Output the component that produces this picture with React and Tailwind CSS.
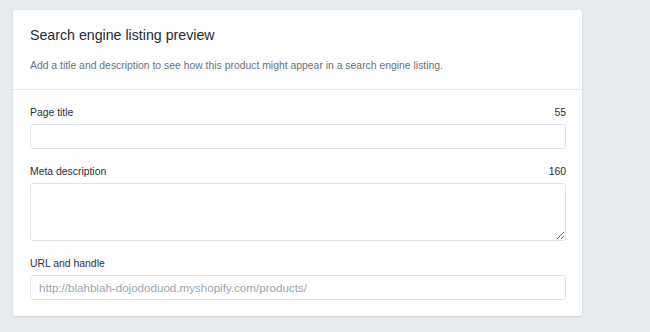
import React from 'react';

function Field({ label, count, children }) {
  return (
    <div className="flex flex-col">
      <div className="flex items-center justify-between h-[12px] mb-[5px] text-[10.4px] leading-[12px] text-[#2a3139]">
        <span>{label}</span>
        {count && <span>{count}</span>}
      </div>
      {children}
    </div>
  );
}

export default function App() {
  return (
    <div className="w-[650px] h-[332px] bg-[#e9ecef] pt-[10px] pl-[13px] font-['Liberation_Sans',Arial,sans-serif]">
      <div className="w-[569px] bg-white rounded-[3px] shadow-[0_1px_2px_rgba(63,63,68,0.15)]">
        <div className="px-[17px] pt-[16px] pb-[16px] border-b border-[#e6e9ec]">
          <h2 className="text-[14.2px] leading-[18px] text-[#212b36]">Search engine listing preview</h2>
          <p className="mt-[15px] text-[10.4px] leading-[14px] text-[#637381]">
            Add a title and description to see how this product might appear in a search engine listing.
          </p>
        </div>
        <div className="pl-[17px] pr-[16px] pt-[17px] pb-[16px] flex flex-col gap-[17px]">
          <Field label="Page title" count="55">
            <input className="h-[25px] w-full border border-[#dfe3e8] rounded-[3px] outline-none" />
          </Field>
          <Field label="Meta description" count="160">
            <textarea className="h-[58px] w-full border border-[#dfe3e8] rounded-[3px] outline-none resize-y block" />
          </Field>
          <Field label="URL and handle">
            <input
              className="h-[25px] w-full border border-[#dfe3e8] rounded-[3px] outline-none px-[8px] text-[11.6px] text-[#212b36] placeholder:text-[#9aa5b0]"
              placeholder="http://blahblah-dojododuod.myshopify.com/products/"
            />
          </Field>
        </div>
      </div>
    </div>
  );
}
